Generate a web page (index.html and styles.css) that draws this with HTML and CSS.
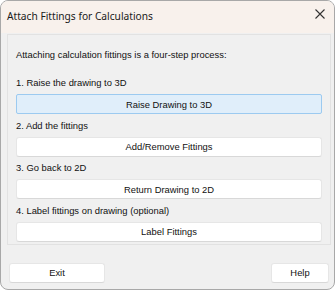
FILE: index.html
```html
<!DOCTYPE html>
<html>
<head>
<meta charset="utf-8">
<link rel="stylesheet" href="styles.css">
</head>
<body>
<div class="window">
  <div class="titlebar">
    <span class="title">Attach Fittings for Calculations</span>
    <svg class="close" width="12" height="12" viewBox="0 0 12 12"><path d="M1.5 1.5 L10.5 10.5 M10.5 1.5 L1.5 10.5" stroke="#333" stroke-width="1.1" fill="none"/></svg>
  </div>
  <div class="content">
    <div class="group">
      <div class="intro">Attaching calculation fittings is a four-step process:</div>
      <div class="label first">1. Raise the drawing to 3D</div>
      <button class="btn primary">Raise Drawing to 3D</button>
      <div class="label">2. Add the fittings</div>
      <button class="btn">Add/Remove Fittings</button>
      <div class="label">3. Go back to 2D</div>
      <button class="btn">Return Drawing to 2D</button>
      <div class="label">4. Label fittings on drawing (optional)</div>
      <button class="btn">Label Fittings</button>
    </div>
    <div class="footer">
      <button class="btn exit">Exit</button>
      <button class="btn help">Help</button>
    </div>
  </div>
</div>
</body>
</html>
```
FILE: styles.css
```css
html, body {
  margin: 0;
  padding: 0;
  background: #ffffff;
}
.window {
  box-sizing: border-box;
  width: 335px;
  height: 290px;
  border: 1px solid #a8a8a8;
  border-radius: 8px;
  overflow: hidden;
  background: #f0f0f0;
  display: flex;
  flex-direction: column;
}
.titlebar {
  height: 32px;
  background: #f8f1ec;
  display: flex;
  align-items: center;
  justify-content: space-between;
  padding: 0 8px 0 6px;
  flex: none;
}
.title {
  font-family: "Noto Sans", "Open Sans", sans-serif;
  font-size: 10.2px;
  color: #1a1a1a;
  margin-top: -2px;
}
.close {
  display: block;
  margin-top: -7px;
}
.content {
  display: flex;
  flex-direction: column;
  padding: 1px 3px 0 6px;
  flex: 1;
}
.group {
  border: 1px solid #e2e2e2;
  padding: 14px 8px 2px 8px;
  display: flex;
  flex-direction: column;
}
.intro, .label {
  font-family: "Liberation Sans", Arial, sans-serif;
  font-size: 9.4px;
  line-height: 12px;
  color: #111;
}
.label {
  margin-top: 5.67px;
}
.label.first {
  margin-top: 16px;
}
.btn {
  font-family: "Liberation Sans", Arial, sans-serif;
  font-size: 9.4px;
  color: #111;
  height: 20px;
  margin: 5px 0 0 0;
  padding: 0;
  background: #ffffff;
  border: 1px solid #e6e6e6;
  border-bottom-color: #d8d8d8;
  border-radius: 3px;
  width: 100%;
}
.btn.primary {
  background: #e0eefa;
  border: 1px solid #9ccaf0;
  border-radius: 2px;
}
.footer {
  display: flex;
  justify-content: space-between;
  margin-top: 18px;
  padding-left: 2px;
  padding-right: 2px;
}
.footer .btn {
  margin: 0;
}
.exit {
  width: 96px;
}
.help {
  width: 58px;
}
```
